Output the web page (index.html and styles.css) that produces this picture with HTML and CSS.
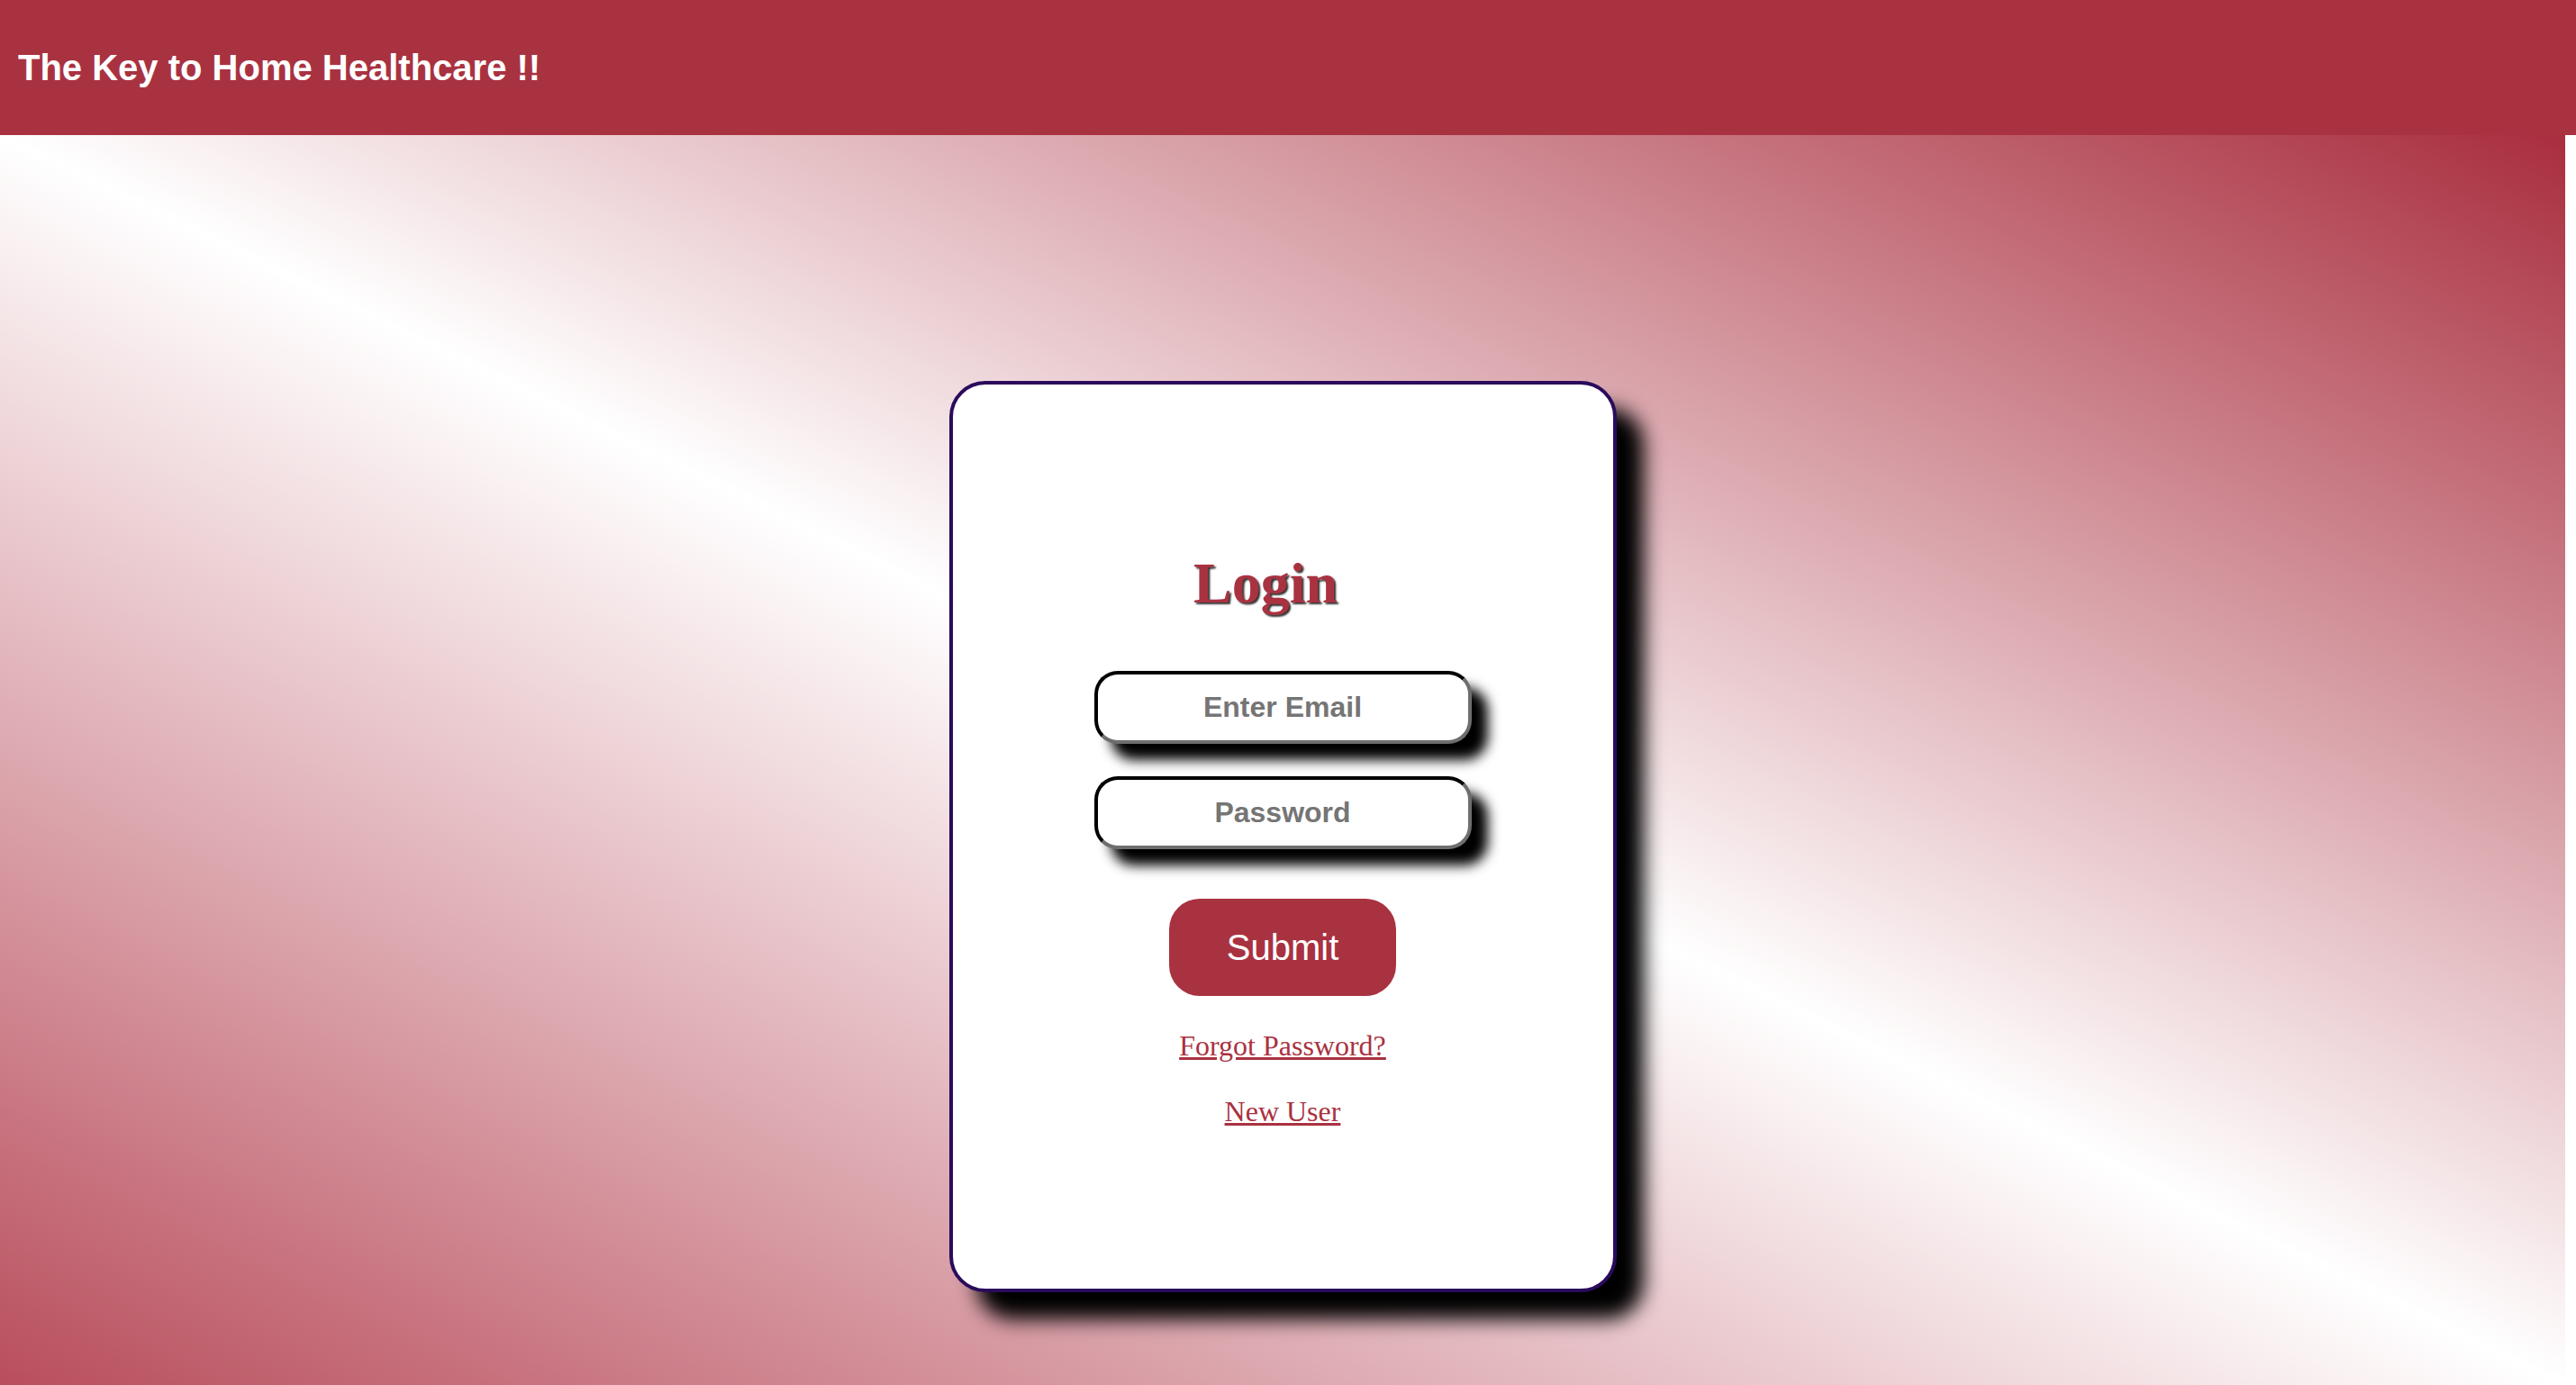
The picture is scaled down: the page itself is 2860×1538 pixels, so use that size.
FILE: index.html
```html
<!DOCTYPE html>
<html lang="en">
<head>
<meta charset="utf-8">
<title>Login</title>
<link rel="stylesheet" href="styles.css">
</head>
<body>
<header class="topbar">
  <h1 class="brand">The Key to Home Healthcare !!</h1>
</header>
<main class="stage">
  <form class="card" onsubmit="return false;">
    <h2 class="card-title">Login</h2>
    <input class="field" type="email" placeholder="Enter Email">
    <input class="field field-pass" type="password" placeholder="Password">
    <button class="submit" type="submit">Submit</button>
    <a class="link link-forgot" href="#">Forgot Password?</a>
    <a class="link link-new" href="#">New User</a>
  </form>
</main>
</body>
</html>
```
FILE: styles.css
```css
html, body {
  margin: 0;
  padding: 0;
}
body {
  background: #ffffff;
  font-family: "Liberation Serif", "Times New Roman", serif;
  overflow: hidden;
}
.topbar {
  height: 150px;
  background: #a93241;
  display: flex;
  align-items: center;
  padding-left: 20px;
}
.brand {
  margin: 0;
  font-family: "Liberation Sans", Arial, sans-serif;
  font-weight: bold;
  font-size: 40px;
  color: #ffffff;
}
.stage {
  width: calc(100% - 12px);
  height: 1388px;
  box-sizing: border-box;
  padding-top: 273px;
  display: flex;
  justify-content: center;
  align-items: flex-start;
  background: linear-gradient(to bottom left, #a92e3e 0%, #ffffff 50%, #b94e5d 100%);
}
.card {
  width: 741px;
  height: 1012px;
  box-sizing: border-box;
  border: 4px solid #2a0b5c;
  border-radius: 40px;
  background: #ffffff;
  box-shadow: 30px 30px 22px #000000;
  display: flex;
  flex-direction: column;
  align-items: center;
}
.card-title {
  margin: 189px 38px 0 0;
  font-family: "Liberation Serif", "Times New Roman", serif;
  font-weight: bold;
  font-size: 64px;
  line-height: 64px;
  color: #a93241;
  text-shadow: 2px 2px 2px #333333;
}
.field {
  margin-top: 65px;
  width: 419px;
  height: 81px;
  box-sizing: border-box;
  border-style: solid;
  border-width: 4px;
  border-color: #000000 #6e6e6e #6e6e6e #000000;
  border-radius: 26px;
  background: #ffffff;
  box-shadow: 18px 18px 14px #000000;
  font-family: "Liberation Sans", Arial, sans-serif;
  font-weight: bold;
  font-size: 32px;
  text-align: center;
  color: #333333;
  outline: none;
  padding: 0 10px;
}
.field::placeholder {
  color: #757575;
}
.field-pass {
  margin-top: 36px;
}
.submit {
  margin-top: 55px;
  width: 252px;
  height: 108px;
  border: none;
  border-radius: 34px;
  background: #a93241;
  color: #ffffff;
  font-family: "Liberation Sans", Arial, sans-serif;
  font-size: 40px;
  cursor: pointer;
}
.link {
  font-family: "Liberation Serif", "Times New Roman", serif;
  font-size: 32px;
  line-height: 36px;
  color: #a93241;
  text-decoration: underline;
}
.link-forgot {
  margin-top: 37px;
}
.link-new {
  margin-top: 37px;
}
```
